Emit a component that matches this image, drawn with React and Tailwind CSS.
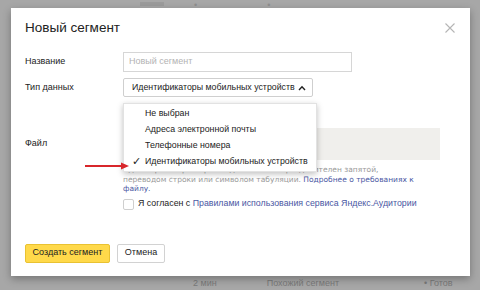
import React from 'react';

const FONT = { fontFamily: '"Liberation Sans", Arial, sans-serif' };
const SMALL = { fontFamily: '"DejaVu Sans", Verdana, sans-serif' };

const OPTIONS = [
  { label: 'Не выбран' },
  { label: 'Адреса электронной почты' },
  { label: 'Телефонные номера' },
  { label: 'Идентификаторы мобильных устройств', checked: true },
];

function Dropdown() {
  return (
    <div className="absolute left-[112px] top-[95px] w-[194px] h-[69px] bg-white border border-[#e2e2e2] shadow-[0_2px_6px_rgba(0,0,0,0.25)] flex flex-col justify-center py-[2px]">
      {OPTIONS.map(o => (
        <div key={o.label} className="h-[16px] flex items-center whitespace-nowrap text-[8.8px] text-[#222] pl-[8px]">
          <span className="w-[13px] text-[11px] leading-none">{o.checked ? '✓' : ''}</span>
          {o.label}
        </div>
      ))}
    </div>
  );
}

function RedArrow() {
  return (
    <svg className="absolute left-[74px] top-[154px]" width="46" height="8" viewBox="0 0 46 8">
      <line x1="0" y1="4" x2="38" y2="4" stroke="#d8262b" strokeWidth="2" />
      <path d="M36 0.5 L44 4 L36 7.5 Z" fill="#d8262b" />
    </svg>
  );
}

export default function App() {
  return (
    <div className="w-[480px] h-[290px] bg-[#a7a7a7] relative overflow-hidden" style={FONT}>
      {/* faint page behind the overlay */}
      <div className="absolute left-0 right-0 top-[2px] flex text-[#8f8f8f] text-[9px] leading-[6px]">
        <span className="ml-[140px] w-[24px] h-[4px] bg-[#9b9b9b]" />
        <span className="ml-[30px]">•</span>
        <span className="ml-[70px]">•</span>
      </div>
      <div className="absolute left-0 right-0 top-[277px] flex items-center whitespace-nowrap text-[#7a7a7a] text-[9px]">
        <span className="ml-[193px]">2 мин</span>
        <span className="ml-[50px]">Похожий сегмент</span>
        <span className="ml-[85px]">• Готов</span>
      </div>

      <div className="pt-[8px] pl-[11px]">
        <div className="relative w-[459px] h-[268px] bg-white shadow-[0_3px_8px_rgba(0,0,0,0.3)] px-[14px] whitespace-nowrap">
          {/* Title */}
          <div className="h-[40px] flex items-center justify-between">
            <span className="text-[13.5px] text-[#222]">Новый сегмент</span>
            <svg className="mr-[1px]" width="10" height="10" viewBox="0 0 10 10">
              <path d="M0.5 0.5 L9.5 9.5 M9.5 0.5 L0.5 9.5" stroke="#b5b5b5" strokeWidth="1.1" />
            </svg>
          </div>

          {/* Name */}
          <div className="mt-[4px] h-[20px] flex items-center">
            <span className="w-[98px] text-[9px] text-[#222]">Название</span>
            <div className="w-[229px] h-[20px] border border-[#d6d6d6] flex items-center pl-[5px] text-[9px] text-[#b3b3b3]">
              Новый сегмент
            </div>
          </div>

          {/* Type */}
          <div className="mt-[6px] h-[19px] flex items-center">
            <span className="w-[98px] text-[9px] text-[#222]">Тип данных</span>
            <div className="w-[190px] h-[19px] border border-[#cfcfcf] rounded-[2px] flex items-center justify-between pl-[8px] pr-[6px] text-[8.8px] text-[#222]">
              <span>Идентификаторы мобильных устройств</span>
              <svg width="8" height="6" viewBox="0 0 8 6">
                <path d="M1 5 L4 1.8 L7 5" stroke="#222" strokeWidth="1.4" fill="none" />
              </svg>
            </div>
          </div>

          {/* File */}
          <div className="mt-[31px] h-[32px] flex items-center">
            <span className="w-[98px] text-[9px] text-[#222]">Файл</span>
            <div className="w-[317px] h-[32px] bg-[#f0efec]" />
          </div>
          <div className="ml-[98px] mt-[5px] text-[7.5px] leading-[9.5px] text-[#9a9a9a]" style={SMALL}>
            Идентификаторы в файле должны быть разделителен запятой,<br />
            переводом строки или символом табуляции. <span className="text-[#4a57a3]">Подробнее о требованиях к</span><br />
            <span className="text-[#4a57a3]">файлу.</span>
          </div>

          {/* Agreement */}
          <div className="ml-[98px] mt-[5px] h-[11px] flex items-center text-[8.8px] text-[#222]">
            <span className="w-[11px] h-[11px] border border-[#cfcfcf] rounded-[2px] mr-[4px] shrink-0" />
            <span>Я согласен с&nbsp;</span>
            <span className="text-[#4a57a3]">Правилами использования сервиса Яндекс.Аудитории</span>
          </div>

          {/* Buttons */}
          <div className="mt-[34px] flex gap-[7px]">
            <button className="w-[85px] h-[19px] bg-[#ffd94a] border border-[#e9c232] rounded-[2px] text-[9px] text-[#222]">
              Создать сегмент
            </button>
            <button className="w-[48px] h-[19px] bg-white border border-[#d2d2d2] rounded-[2px] text-[9px] text-[#222]">
              Отмена
            </button>
          </div>

          <Dropdown />
          <RedArrow />
        </div>
      </div>
    </div>
  );
}
